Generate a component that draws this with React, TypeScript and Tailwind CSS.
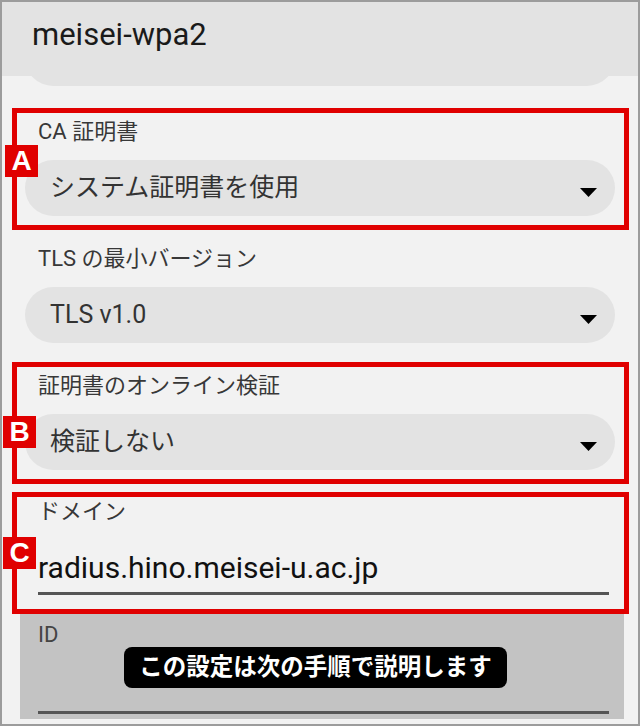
const jp = "font-['Roboto','Noto_Sans_CJK_JP',sans-serif]"

function Caret() {
  return (
    <svg width="17" height="9" viewBox="0 0 17 9" className="mt-[9px] shrink-0">
      <path d="M0 0h17L8.5 9z" fill="#000" />
    </svg>
  )
}

function Select({ value }: { value: string }) {
  return (
    <div className="ml-[8px] w-[590px] h-[56px] rounded-full bg-[#e3e3e3] flex items-center justify-between pl-[25px] pr-[18px]">
      <span className="text-[25px] leading-[30px] text-[#333]">{value}</span>
      <Caret />
    </div>
  )
}

function Badge({ letter, className }: { letter: string; className: string }) {
  return (
    <span
      className={`absolute w-[33px] h-[32px] bg-[#e00000] text-white flex items-center justify-center font-['Liberation_Sans',sans-serif] font-bold text-[28px] leading-none ${className}`}
    >
      {letter}
    </span>
  )
}

function Field({
  label,
  value,
  marked,
  badge,
  className = '',
}: {
  label: string
  value: string
  marked?: boolean
  badge?: React.ReactNode
  className?: string
}) {
  return (
    <div
      className={`relative ml-[10px] w-[617px] h-[122px] border-[5px] pt-[6px] ${
        marked ? 'border-[#e00000]' : 'border-transparent'
      } ${className}`}
    >
      <p className="pl-[21px] text-[22px] leading-[26px] text-[#383838]">{label}</p>
      <div className="mt-[15px]">
        <Select value={value} />
      </div>
      {badge}
    </div>
  )
}

export default function App() {
  return (
    <div className={`w-[640px] h-[726px] overflow-hidden border-2 border-[#9c9c9c] bg-[#f2f2f2] ${jp}`}>
      {/* header */}
      <div className="h-[74px] bg-[#e3e3e3] pl-[30px] pt-[15px]">
        <h1 className="text-[31px] leading-[36px] text-[#1a1a1a]">meisei-wpa2</h1>
      </div>
      {/* bottom of the previous field, scrolled under the header */}
      <div className="ml-[23px] w-[590px] h-[10px] overflow-hidden">
        <div className="-mt-[46px] h-[56px] rounded-full bg-[#e3e3e3]" />
      </div>

      <Field
        className="mt-[22px]"
        label="CA 証明書"
        value="システム証明書を使用"
        marked
        badge={<Badge letter="A" className="left-[-12px] top-[32px]" />}
      />
      <Field className="mt-[5px]" label="TLS の最小バージョン" value="TLS v1.0" />
      <Field
        className="mt-[5px]"
        label="証明書のオンライン検証"
        value="検証しない"
        marked
        badge={<Badge letter="B" className="left-[-14px] top-[49px]" />}
      />

      {/* domain */}
      <div className="relative mt-[8px] ml-[10px] w-[617px] h-[122px] border-[5px] border-[#e00000] pt-[2px]">
        <p className="pl-[21px] text-[22px] leading-[26px] text-[#383838]">ドメイン</p>
        <p className="mt-[25px] pl-[21px] text-[30px] leading-[36px] text-[#111] font-['Roboto',sans-serif]">
          radius.hino.meisei-u.ac.jp
        </p>
        <div className="mt-[6px] ml-[21px] w-[571px] h-[3px] bg-[#555]" />
        <Badge letter="C" className="left-[-14px] top-[40px]" />
      </div>

      {/* dimmed next field */}
      <div className="ml-[18px] w-[604px] h-[105px] bg-[#c3c3c3] pt-[10px]">
        <p className="pl-[18px] text-[22px] leading-[22px] text-[#444]">ID</p>
        <div className="mt-[1px] ml-[104px] w-[383px] h-[41px] rounded-[8px] bg-black flex items-center justify-center">
          <span className="text-white font-bold text-[23.5px] leading-none">この設定は次の手順で説明します</span>
        </div>
        <div className="mt-[23px] ml-[18px] w-[571px] h-[3px] bg-[#555]" />
      </div>
    </div>
  )
}
